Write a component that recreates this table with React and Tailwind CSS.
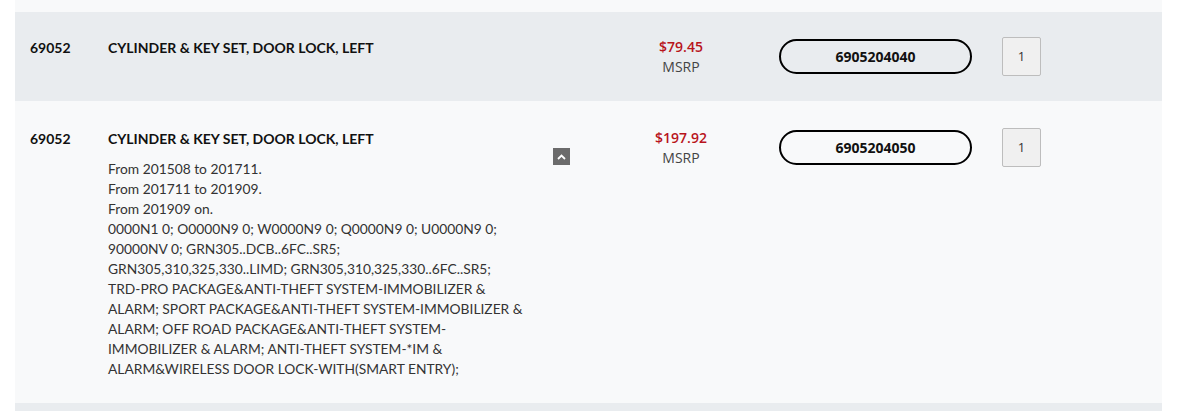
import React from "react";

const rows = [
  {
    num: "69052",
    name: "CYLINDER & KEY SET, DOOR LOCK, LEFT",
    price: "$79.45",
    part: "6905204040",
    bg: "bg-[#e9ecef]",
    pad: "h-[89px] pt-[25px]",
    desc: null,
  },
  {
    num: "69052",
    name: "CYLINDER & KEY SET, DOOR LOCK, LEFT",
    price: "$197.92",
    part: "6905204050",
    bg: "bg-[#f8f9fa]",
    pad: "pt-[27px] pb-[24px]",
    desc: [
      "From 201508 to 201711.",
      "From 201711 to 201909.",
      "From 201909 on.",
      "0000N1 0; O0000N9 0; W0000N9 0; Q0000N9 0; U0000N9 0;",
      "90000NV 0; GRN305..DCB..6FC..SR5;",
      "GRN305,310,325,330..LIMD; GRN305,310,325,330..6FC..SR5;",
      "TRD-PRO PACKAGE&ANTI-THEFT SYSTEM-IMMOBILIZER &",
      "ALARM; SPORT PACKAGE&ANTI-THEFT SYSTEM-IMMOBILIZER &",
      "ALARM; OFF ROAD PACKAGE&ANTI-THEFT SYSTEM-",
      "IMMOBILIZER & ALARM; ANTI-THEFT SYSTEM-*IM &",
      "ALARM&WIRELESS DOOR LOCK-WITH(SMART ENTRY);",
    ],
  },
];

function PartRow({ row }) {
  return (
    <div className={`flex items-start px-[15px] ${row.bg} ${row.pad}`}>
      <div className="w-[78px] mt-[1px] text-[14px] leading-[20px] font-bold text-[#111]">
        {row.num}
      </div>

      <div className="w-[445px]">
        <div className="mt-[1px] text-[14px] leading-[20px] font-bold text-[#111]">
          {row.name}
        </div>
        {row.desc && (
          <div className="mt-[10px] text-[13.8px] leading-[20px] text-[#333] whitespace-nowrap">
            {row.desc.map((d, i) => (
              <div key={i}>{d}</div>
            ))}
          </div>
        )}
      </div>

      <div className="w-[17px]">
        {row.desc && (
          <button className="mt-[20px] flex h-[17px] w-[17px] items-center justify-center bg-[#6b6b6b]">
            <svg width="9" height="6" viewBox="0 0 9 6" fill="none">
              <polyline points="1,5 4.5,1.5 8,5" stroke="#fff" strokeWidth="1.8" />
            </svg>
          </button>
        )}
      </div>

      <div className="w-[209px] pl-[13px] flex flex-col items-center font-['Open_Sans',sans-serif] text-[14px] leading-[20px]">
        <span className="font-semibold text-[#b8141c]">{row.price}</span>
        <span className="text-[#444]">MSRP</span>
      </div>

      <button className="mt-[2px] h-[35px] w-[193px] rounded-full border-2 border-black bg-transparent font-['Open_Sans',sans-serif] text-[14px] font-bold text-[#111]">
        {row.part}
      </button>

      <div className="ml-[30px] flex h-[39px] w-[39px] items-center justify-center rounded-[2px] border border-[#bdbdbd] bg-[#f0f0f0] font-['Open_Sans',sans-serif] text-[13px] text-[#333]">
        1
      </div>
    </div>
  );
}

export default function App() {
  return (
    <div className="h-[411px] w-[1179px] overflow-hidden bg-white font-['Lato',sans-serif]">
      <div className="ml-[15px] w-[1147px] bg-[#f8f9fa]">
        <div className="h-[12px]" />
        {rows.map((r, i) => (
          <PartRow key={i} row={r} />
        ))}
        <div className="h-[20px] bg-[#e9ecef]" />
      </div>
    </div>
  );
}
